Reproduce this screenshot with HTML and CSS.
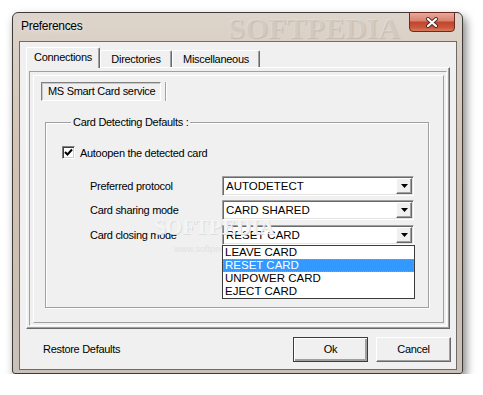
FILE: index.html
```html
<!DOCTYPE html>
<html>
    <head>
        <title>Preferences</title>
        <link rel="stylesheet" href="styles.css">
    </head>
    <body>
        <div class="window">
            <div class="titlebar">
                <span class="title">Preferences</span>
                <span class="wm-title">SOFTPEDIA</span>
                <button class="close">
                    <svg width="14" height="11" viewBox="0 0 14 11">
                        <path d="M3 2 L11 9 M11 2 L3 9" stroke="#4a2a24" stroke-width="4" stroke-linecap="round"/>
                        <path d="M3 2 L11 9 M11 2 L3 9" stroke="#fff" stroke-width="2.2" stroke-linecap="round"/>
                    </svg>
                </button>
            </div>
            <div class="client">
                <div class="tabs">
                    <div class="tab active">Connections</div>
                    <div class="tab tab-dir">Directories</div>
                    <div class="tab tab-misc">Miscellaneous</div>
                </div>
                <div class="page">
                    <div class="inner">
                        <div class="subpage">
                            <div class="subtabs">
                                <div class="subtab">MS Smart Card service</div>
                                <span class="subsep"></span>
                            </div>
                            <fieldset class="group">
                                <legend>Card Detecting Defaults :</legend>
                                <label class="check">
                                    <span class="box">
                                        <svg width="9" height="9" viewBox="0 0 9 9">
                                            <path d="M1 4 L3.5 6.5 L8 1.5" stroke="#000" stroke-width="2" fill="none"/>
                                        </svg>
                                    </span>
                                    Autoopen the detected card
                                </label>
                                <div class="field">
                                    <span class="label">Preferred protocol</span>
                                    <div class="combo">
                                        <span class="value">AUTODETECT</span>
                                        <span class="arrow"><svg width="7" height="4" viewBox="0 0 7 4"><polygon points="0,0 7,0 3.5,4" fill="#000"/></svg></span>
                                    </div>
                                </div>
                                <div class="field">
                                    <span class="label">Card sharing mode</span>
                                    <div class="combo">
                                        <span class="value">CARD SHARED</span>
                                        <span class="arrow"><svg width="7" height="4" viewBox="0 0 7 4"><polygon points="0,0 7,0 3.5,4" fill="#000"/></svg></span>
                                    </div>
                                </div>
                                <div class="field last">
                                    <span class="label">Card closing mode</span>
                                    <div class="combo">
                                        <span class="value">RESET CARD</span>
                                        <span class="arrow"><svg width="7" height="4" viewBox="0 0 7 4"><polygon points="0,0 7,0 3.5,4" fill="#000"/></svg></span>
                                        <ul class="droplist">
                                            <li>LEAVE CARD</li>
                                            <li class="sel">RESET CARD</li>
                                            <li>UNPOWER CARD</li>
                                            <li>EJECT CARD</li>
                                        </ul>
                                    </div>
                                </div>
                            </fieldset>
                            <span class="wm-mid">SOFTPEDIA</span>
                            <span class="wm-url">www.softpedia.com</span>
                        </div>
                    </div>
                </div>
                <div class="footer">
                    <button class="restore">Restore Defaults</button>
                    <button class="btn default">Ok</button>
                    <button class="btn">Cancel</button>
                </div>
            </div>
        </div>
    </body>
</html>
```

FILE: styles.css
```css
* {
    box-sizing: border-box;
}

body {
    margin: 0;
    background: #fff;
    font-family: "Liberation Sans", Arial, sans-serif;
    font-size: 11px;
    letter-spacing: -0.3px;
    color: #000;
}

button {
    font-family: inherit;
    font-size: inherit;
    letter-spacing: inherit;
    color: inherit;
}

/* window frame */
.window {
    margin: 12px 0 0 12px;
    width: 451px;
    height: 362px;
    border: 1px solid #3d3a37;
    border-radius: 6px 6px 3px 3px;
    padding: 0 5px 3px 6px;
    background: linear-gradient(180deg, #ddd4cb 0, #d3c4b5 35%, #cdbfb2 70%, #c9c1b9 100%);
    box-shadow: 3px 5px 10px rgba(0, 0, 0, 0.5);
    display: flex;
    flex-direction: column;
}

.titlebar {
    height: 28px;
    position: relative;
    display: flex;
    align-items: flex-start;
    justify-content: space-between;
}

.title {
    font-size: 12px;
    line-height: 27px;
    padding-left: 2px;
    text-shadow: 0 0 6px rgba(255, 255, 255, 0.9);
}

.wm-title {
    position: absolute;
    left: 209px;
    top: 0;
    font-family: "Liberation Serif", serif;
    font-weight: bold;
    font-size: 30px;
    line-height: 30px;
    letter-spacing: 0;
    color: rgba(255, 255, 255, 0.22);
    text-shadow: 1px 1px 1px rgba(120, 100, 80, 0.2);
}

.close {
    width: 46px;
    height: 20px;
    margin: -1px 2px 0 0;
    padding: 0;
    border: 1px solid #6b2a1f;
    border-radius: 0 0 4px 4px;
    background: linear-gradient(180deg, #e9a89a 0%, #d98371 42%, #c2452d 52%, #c9583d 80%, #d77a5c 100%);
    display: flex;
    align-items: center;
    justify-content: center;
    position: relative;
    z-index: 1;
}

/* client area */
.client {
    height: 329px;
    border: 1px solid #6f6a66;
    background: #f0f0f0;
    padding: 5px 6px 0 6px;
    display: flex;
    flex-direction: column;
}

.tabs {
    display: flex;
    align-items: flex-end;
    height: 20px;
}

.tab {
    height: 17px;
    line-height: 16px;
    text-align: center;
    border: 1px solid;
    border-color: #fff #696969 transparent #fff;
    border-bottom: none;
    border-radius: 2px 2px 0 0;
    box-shadow: inset -1px 0 #a0a0a0;
    width: 72px;
}

.tab.active {
    width: 74px;
    height: 21px;
    line-height: 19px;
    margin-bottom: -1px;
    position: relative;
    z-index: 1;
    background: #f0f0f0;
}

.tab-misc {
    width: 88px;
}

.page {
    height: 262px;
    border: 1px solid;
    border-color: #fff #696969 #696969 #fff;
    box-shadow: inset -1px -1px #a0a0a0;
    padding: 3px 2px 2px 2px;
}

.inner {
    height: 100%;
    border: 1px solid;
    border-color: #a0a0a0 #fff #fff #a0a0a0;
    padding: 3px 2px 2px 3px;
}

.subpage {
    height: 100%;
    position: relative;
    border: 1px solid;
    border-color: #fff #a0a0a0 #a0a0a0 #fff;
    padding: 6px 14px 14px 7px;
    display: flex;
    flex-direction: column;
}

.subtabs {
    display: flex;
    height: 19px;
}

.subtab {
    width: 120px;
    padding-left: 6px;
    line-height: 17px;
    border: 1px solid;
    border-color: #808080 #fff #fff #808080;
    box-shadow: inset 1px 1px #c8c8c8;
}

.subsep {
    margin-left: 4px;
    border-left: 1px solid #a0a0a0;
    border-right: 1px solid #fff;
}

/* group box */
.group {
    flex: 1;
    margin: 15px 0 0 4px;
    padding: 17px 0 0 16px;
    border: 1px solid #a0a0a0;
    box-shadow: inset 1px 1px #fff, 1px 1px #fff;
    min-width: 0;
}

.group legend {
    margin-left: 9px;
    padding: 0 2px;
    line-height: 13px;
    background: #f0f0f0;
}

.check {
    display: flex;
    align-items: center;
    height: 13px;
}

.box {
    width: 13px;
    height: 13px;
    margin-right: 5px;
    border: 1px solid;
    border-color: #808080 #fff #fff #808080;
    box-shadow: inset 1px 1px #404040, inset -1px -1px #d4d0c8;
    background: #fff;
    display: flex;
    align-items: center;
    justify-content: center;
}

.field {
    display: flex;
    align-items: center;
    margin: 4px 0 0 28px;
}

.check + .field {
    margin-top: 17px;
}

.field.last {
    margin-top: 5px;
}

.label {
    width: 132px;
}

.combo {
    position: relative;
    width: 192px;
    height: 20px;
    display: flex;
    align-items: center;
    padding: 2px 1px 2px 2px;
    background: #fff;
    border: 1px solid;
    border-color: #a0a0a0 #fff #fff #a0a0a0;
    box-shadow: inset 1px 1px #696969, inset -1px -1px #e3e3e3;
}

.value {
    flex: 1;
    padding-left: 1px;
    font-size: 11.5px;
    letter-spacing: 0;
}

.arrow {
    width: 16px;
    height: 16px;
    border: 1px solid;
    border-color: #fff #696969 #696969 #fff;
    box-shadow: inset -1px -1px #a0a0a0;
    background: #f0f0f0;
    display: flex;
    align-items: center;
    justify-content: center;
}

.droplist {
    position: absolute;
    top: 100%;
    left: -1px;
    width: 193px;
    margin: 1px 0 0 0;
    padding: 0;
    list-style: none;
    background: #fff;
    border: 1px solid #3c3c3c;
    z-index: 2;
}

.droplist li {
    height: 13px;
    line-height: 13px;
    padding-left: 2px;
    font-size: 11.5px;
    letter-spacing: 0;
}

.droplist li.sel {
    background: #3399ff;
    color: #fff;
    outline: 1px dotted #e08a3a;
    outline-offset: -1px;
}

/* watermark */
.wm-mid {
    position: absolute;
    left: 120px;
    top: 139px;
    font-family: "Liberation Serif", serif;
    font-weight: bold;
    font-size: 21px;
    letter-spacing: 0;
    color: #f4f4f4;
    text-shadow: 1px 1px 0 #dcdcdc;
}

.wm-url {
    position: absolute;
    left: 140px;
    top: 168px;
    font-size: 9px;
    letter-spacing: 0;
    color: #e2e2e2;
}

/* footer */
.footer {
    height: 40px;
    display: flex;
    align-items: center;
    margin: 0 -6px;
    padding: 0 5px 0 23px;
}

.restore {
    margin: 0 auto 0 0;
    padding: 0;
    border: none;
    background: none;
}

.btn {
    width: 75px;
    height: 25px;
    margin-left: 8px;
    padding: 0;
    background: #f0f0f0;
    border: 1px solid;
    border-color: #fff #696969 #696969 #fff;
    box-shadow: inset -1px -1px #a0a0a0;
}

.btn.default {
    border: 1px solid #3c3c3c;
    box-shadow: inset 1px 1px #fff, inset -2px -2px #a0a0a0;
}
```
